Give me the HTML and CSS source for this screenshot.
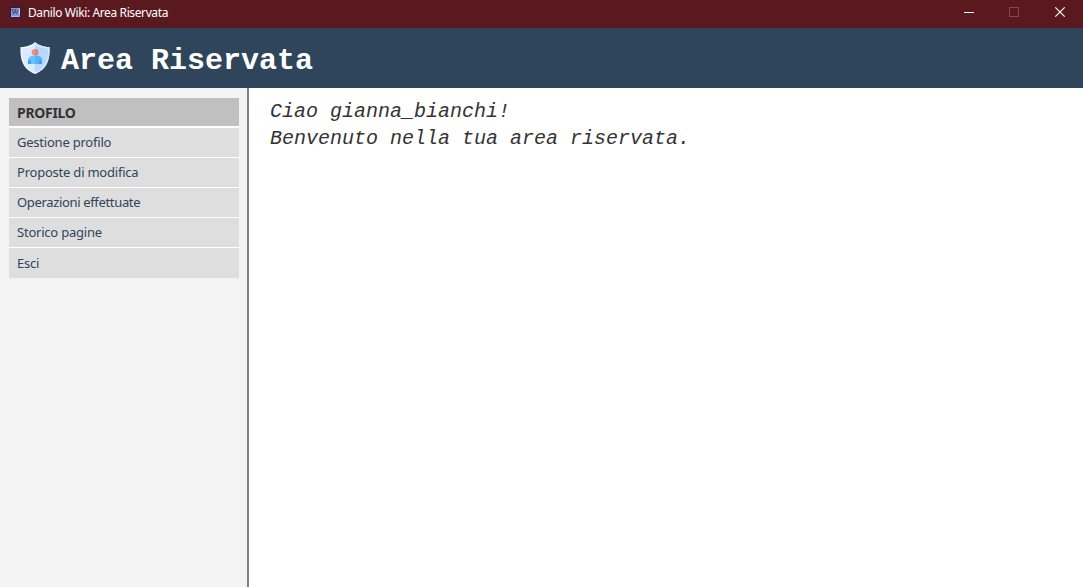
FILE: index.html
```html
<!DOCTYPE html>
<html lang="it">
<head>
<meta charset="utf-8">
<title>Danilo Wiki: Area Riservata</title>
<link rel="stylesheet" href="styles.css">
</head>
<body>
<div class="titlebar">
  <svg class="app-icon" width="13" height="13" viewBox="0 0 13 13">
    <rect x="1.500" y="1.500" width="10" height="10" fill="#8b97cf" stroke="#26204d" stroke-width="1"/>
    <path d="M2.500 3.500h2M5.500 3.500h2M3.300 3.700l1.200 4.500 1.500-4 1.500 4L9 3.700" fill="none" stroke="#41446f" stroke-width="0.900"/>
    <path d="M10.500 2.500v6" stroke="#c0cbf5" stroke-width="1"/>
    <path d="M2 10.500h8" stroke="#aab5e8" stroke-width="1"/>
  </svg>
  <span class="window-title">Danilo Wiki: Area Riservata</span>
  <div class="controls">
    <svg width="46" height="28" viewBox="0 0 46 28"><path d="M18 12.500h10" stroke="#fff"/></svg>
    <svg width="46" height="28" viewBox="0 0 46 28"><rect x="17.500" y="7.500" width="9" height="9" fill="none" stroke="#82464b"/></svg>
    <svg width="46" height="28" viewBox="0 0 46 28"><path d="M17.300 7.300l9.400 9.400M26.700 7.300l-9.400 9.400" stroke="#fff" stroke-width="1.200"/></svg>
  </div>
</div>
<header class="header">
  <svg class="shield" width="32" height="32" viewBox="0 0 32 32">
    <path d="M16 0C12.500 3.500 7 5 1.500 5C1 16 3 27 16 32C29 27 31 16 30.500 5C25 5 19.500 3.500 16 0Z" fill="#edf5ff"/>
    <path d="M16 0V32C29 27 31 16 30.500 5C25 5 19.500 3.500 16 0Z" fill="#d5e6fb"/>
    <path d="M16 2.300C12.500 5.300 8 6.500 3 6.700C2.800 16 5 25.500 16 30.200Z" fill="#dbeaff"/>
    <path d="M16 2.300C19.500 5.300 24 6.500 29 6.700C29.200 16 27 25.500 16 30.200Z" fill="#b5d9ff"/>
    <path d="M9 22V18.500C9 15 11.500 13.500 16 13.500S23 15 23 18.500V22Z" fill="#68c3ff"/>
    <path d="M16 13.500C20.500 13.500 23 15 23 18.500V22H16Z" fill="#5ab3fc"/>
    <path d="M9 22V18.500L12 18V22ZM23 22V18.500L20 18V22Z" fill="#4a98f7"/>
    <circle cx="16" cy="10.200" r="3.300" fill="#ed9180"/>
    <path d="M16 6.900a3.300 3.300 0 0 1 0 6.600Z" fill="#dc8279"/>
  </svg>
  <h1 class="heading">Area Riservata</h1>
</header>
<div class="body">
  <nav class="sidebar">
    <div class="menu">
      <div class="menu-title">PROFILO</div>
      <a class="item">Gestione profilo</a>
      <a class="item">Proposte di modifica</a>
      <a class="item tight">Operazioni effettuate</a>
      <a class="item">Storico pagine</a>
      <a class="item last">Esci</a>
    </div>
  </nav>
  <main class="content">
    <p class="welcome">Ciao gianna_bianchi!<br>Benvenuto nella tua area riservata.</p>
  </main>
</div>
</body>
</html>
```
FILE: styles.css
```css
* { box-sizing: border-box; }
body {
  margin: 0;
  height: 587px;
  display: flex;
  flex-direction: column;
  overflow: hidden;
  background: #fff;
  font-family: "Noto Sans", "Open Sans", sans-serif;
}
.titlebar {
  height: 28px;
  flex: none;
  display: flex;
  background: #5a191f;
  color: #fff;
  padding-left: 9px;
}
.app-icon { margin: 6px 6px 0 0; }
.window-title { font-size: 12px; line-height: 26px; letter-spacing: -0.39px; white-space: nowrap; }
.controls { margin-left: auto; display: flex; margin-right: -1px; }
.controls svg { display: block; }
.header {
  height: 60px;
  flex: none;
  display: flex;
  background: #2f455c;
  padding-left: 19px;
}
.shield { margin: 14px 10px 0 0; }
.heading {
  margin: 0;
  font: bold 30px/66px "Courier New", "Liberation Mono", monospace;
  color: #fff;
  white-space: nowrap;
}
.body { flex: 1; display: flex; }
.sidebar {
  width: 249px;
  flex: none;
  background: #f3f3f3;
  border-right: 2px solid #808080;
  padding: 10px 8px 0 9px;
}
.menu { background: #fff; }
.menu-title {
  height: 30px;
  border-bottom: 2px solid #fff;
  background: #c0c0c0;
  color: #333;
  font-weight: bold;
  font-size: 14px;
  line-height: 29px;
  letter-spacing: -0.3px;
  padding-left: 8px;
}
.item {
  display: block;
  height: 30px;
  border-bottom: 1px solid #fff;
  background: #dedede;
  color: #2f455c;
  font-size: 13px;
  line-height: 29px;
  letter-spacing: -0.22px;
  padding-left: 8px;
}
.tight { letter-spacing: -0.34px; }
.last { border-bottom: 0; line-height: 31px; }
.content { flex: 1; padding: 10px 21px; }
.welcome {
  margin: 0;
  font: italic 20px/27px "Courier New", "Liberation Mono", monospace;
  color: #333;
}
```
